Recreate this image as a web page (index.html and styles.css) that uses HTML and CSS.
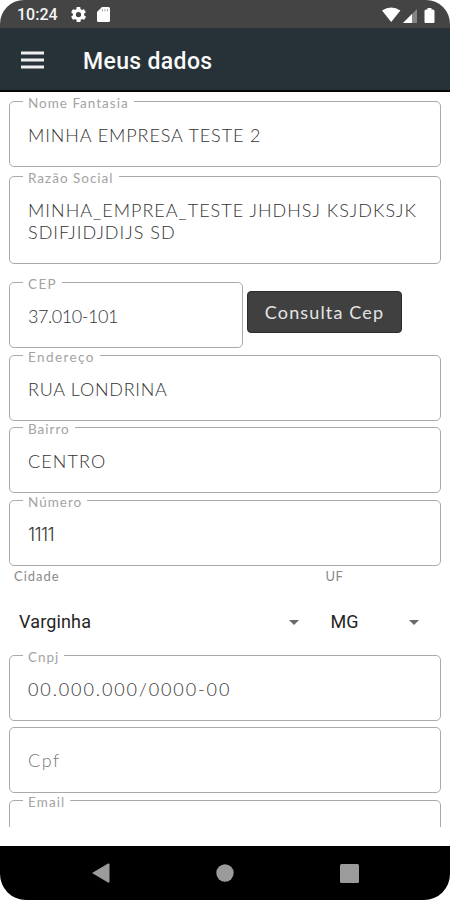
FILE: index.html
```html
<!DOCTYPE html>
<html lang="pt-BR">
<head>
<meta charset="utf-8">
<title>Meus dados</title>
<link rel="stylesheet" href="styles.css">
</head>
<body>
<div class="phone">
  <div class="status">
    <span class="clock">10:24</span>
    <svg class="gear" width="15" height="15" viewBox="2 2 20 20"><path fill="#fff" fill-rule="evenodd" d="M19.4 13a7.500 7.500 0 0 0 0-2l2.100-1.600a.5.5 0 0 0 .1-.6l-2-3.500a.5.5 0 0 0-.6-.2l-2.500 1a7.300 7.300 0 0 0-1.700-1l-.4-2.700a.5.5 0 0 0-.5-.4h-4a.5.5 0 0 0-.5.4L9.200 5.100a7.700 7.700 0 0 0-1.700 1l-2.500-1a.5.5 0 0 0-.6.2l-2 3.500a.5.5 0 0 0 .1.6L4.600 11a8 8 0 0 0 0 2l-2.100 1.600a.5.5 0 0 0-.1.6l2 3.500c.1.200.4.300.6.200l2.500-1a7.300 7.300 0 0 0 1.700 1l.4 2.700c0 .2.200.4.500.4h4c.3 0 .5-.2.5-.4l.4-2.700a7.700 7.700 0 0 0 1.700-1l2.500 1c.2.1.5 0 .6-.2l2-3.500a.5.5 0 0 0-.1-.6zM12 15.500a3.500 3.500 0 1 1 0-7 3.500 3.500 0 0 1 0 7z"/></svg>
    <svg class="card" width="13" height="15" viewBox="0 0 13 15"><path fill="#fff" d="M5 0h6.500A1.500 1.500 0 0 1 13 1.500v12a1.500 1.500 0 0 1-1.500 1.500h-10A1.500 1.500 0 0 1 0 13.500V5z"/><path stroke="#aaa" stroke-width="1" d="M5.500 2v2.500M8 2v2.500M10.500 2v2.500"/></svg>
    <svg class="signals" width="54" height="18" viewBox="0 0 54 18"><path fill="#fff" d="M0 4.500Q9.200-1.500 18.400 4.500L9.200 16z"/><path fill="#858585" d="M35 3v14H21z"/><path fill="#fff" d="M30 8v9h-9z"/><path fill="#fff" d="M45.500 2h4v1.500h1.500q1.500 0 1.500 1.500V16q0 1-1 1h-8q-1 0-1-1V5q0-1.500 1.500-1.500h1.500z"/></svg>
  </div>
  <header class="bar">
    <svg width="23" height="18" viewBox="0 0 23 18"><path stroke="#eee" stroke-width="2.800" d="M0 2h23M0 9h23M0 16h23"/></svg>
    <h1><span>Meus dados</span></h1>
  </header>
  <main class="form">
    <div class="field"><label>Nome Fantasia</label><span class="v-nome">MINHA EMPRESA TESTE 2</span></div>
    <div class="field tall"><label>Razão Social</label><span class="v-razao">MINHA_EMPREA_TESTE JHDHSJ KSJDKSJK<br>SDIFJIDJDIJS SD</span></div>
    <div class="cep-row">
      <div class="field"><label class="l-cep">CEP</label><span class="v-cep">37.010-101</span></div>
      <button><span>Consulta Cep</span></button>
    </div>
    <div class="field"><label class="l-end">Endereço</label><span class="v-end">RUA LONDRINA</span></div>
    <div class="field"><label>Bairro</label><span class="v-bairro">CENTRO</span></div>
    <div class="field"><label>Número</label><span class="v-num">1111</span></div>
    <div class="selects">
      <div class="city"><small>Cidade</small><div class="select"><span>Varginha</span><i></i></div></div>
      <div class="state"><small>UF</small><div class="select"><span>MG</span><i></i></div></div>
    </div>
    <div class="field"><label>Cnpj</label><span class="v-cnpj">00.000.000/0000-00</span></div>
    <div class="field open"><span class="placeholder">Cpf</span></div>
    <div class="field"><label class="l-email">Email</label></div>
  </main>
  <nav class="nav">
    <svg width="18" height="20" viewBox="0 0 18 20"><path fill="#9b9b9b" d="M0 10 16 .5q1.500-.5 1.500 1v17q0 1.500-1.500 1z"/></svg>
    <svg width="18" height="18" viewBox="0 0 18 18"><circle cx="9" cy="9" r="8.700" fill="#9b9b9b"/></svg>
    <svg width="19" height="19" viewBox="0 0 19 19"><rect width="19" height="19" rx="1.500" fill="#9b9b9b"/></svg>
  </nav>
</div>
</body>
</html>
```
FILE: styles.css
```css
* { box-sizing: border-box; }
body { margin: 0; background: #fff; font-family: Lato, sans-serif; }
.phone { width: 450px; height: 900px; border-radius: 24px 24px 26px 26px; overflow: hidden; display: flex; flex-direction: column; background: #fff; }
.status { height: 28px; flex: none; background: #444; display: flex; align-items: center; padding: 0 14px 0 17px; }
.clock { font: 500 16px/28px Roboto, sans-serif; color: #f4f4f4; width: 54px; padding-top: 2px; }
.gear { margin-right: 11px; margin-top: 1px; }
.card { margin-top: 1px; }
.signals { margin-left: auto; margin-top: 1px; }
.bar { height: 64px; flex: none; background: #263238; border-bottom: 2px solid #050708; display: flex; align-items: center; padding: 1px 22px 0 21px; }
.bar h1 { margin: 0 0 0 39px; font: 500 23px/30px Roboto, sans-serif; letter-spacing: .35px; color: #fafafa; padding-top: 5px; }
.form { height: 735px; flex: none; overflow: hidden; padding: 9px 9px 0; margin-bottom: 19px; display: flex; flex-direction: column; }
.field { position: relative; height: 66px; flex: none; border: 1.500px solid #aaa; border-radius: 5px; padding: 22px 0 0 18px; margin-bottom: 6.700px; font-size: 18px; line-height: 22px; font-weight: 300; color: #333; white-space: nowrap; }
.field:first-child { margin-bottom: 9px; }
.tall { height: 88px; margin-bottom: 18px; }
.open { padding-top: 21px; }
.field label { position: absolute; left: 13px; top: -4px; height: 10px; padding: 0 5px; background: #fff; font-size: 13.500px; line-height: 10px; font-weight: 400; letter-spacing: 1px; color: #a3a3a3; }
.cep-row { display: flex; height: 72.500px; flex: none; }
.cep-row .field { width: 234px; margin: 0; }
.cep-row button { width: 155px; height: 42px; margin: 9px 0 0 4px; padding: 0; border: 1px solid #2b2b2b; border-radius: 4px; background: #404040; color: #e4e4e4; font: 400 18px/40px Lato, sans-serif; letter-spacing: 1.150px; }
.selects { display: flex; height: 82.400px; flex: none; margin-top: -.4px; }
.selects small { display: block; font-size: 13px; line-height: 16px; letter-spacing: 1px; color: #8a8a8a; }
.city { width: 311px; padding-left: 5px; margin-top: -4px; }
.state { width: 110px; padding-left: 5.500px; margin-top: -4px; }
.state small { letter-spacing: .5px; }
.select { display: flex; align-items: center; justify-content: space-between; height: 24px; margin-top: 26px; padding: 0 21px 0 5px; font: 400 18px/24px Roboto, sans-serif; letter-spacing: .15px; color: #252525; }
.state .select { padding-right: 11.500px; }
.select i { border: 5.500px solid transparent; border-top: 5.500px solid #6a6a6a; border-bottom: 0; }
.placeholder { color: #777; letter-spacing: 1.600px; }
.nav { height: 54px; flex: none; background: #000; display: flex; align-items: center; justify-content: space-between; padding: 0 91px 0 92px; }
.v-nome { letter-spacing: .9px; }
.v-razao { letter-spacing: 1.010px; }
.v-cep { letter-spacing: -.45px; }
.v-end { letter-spacing: .75px; }
.v-bairro { letter-spacing: 1.100px; }
.v-num { font-family: Inter, sans-serif; letter-spacing: -.6px; }
.v-cnpj { letter-spacing: 1.900px; }
.field .l-cep { letter-spacing: 1.400px; }
.field .l-end { letter-spacing: 1.400px; }
.field .l-email { letter-spacing: 1.100px; }
```
